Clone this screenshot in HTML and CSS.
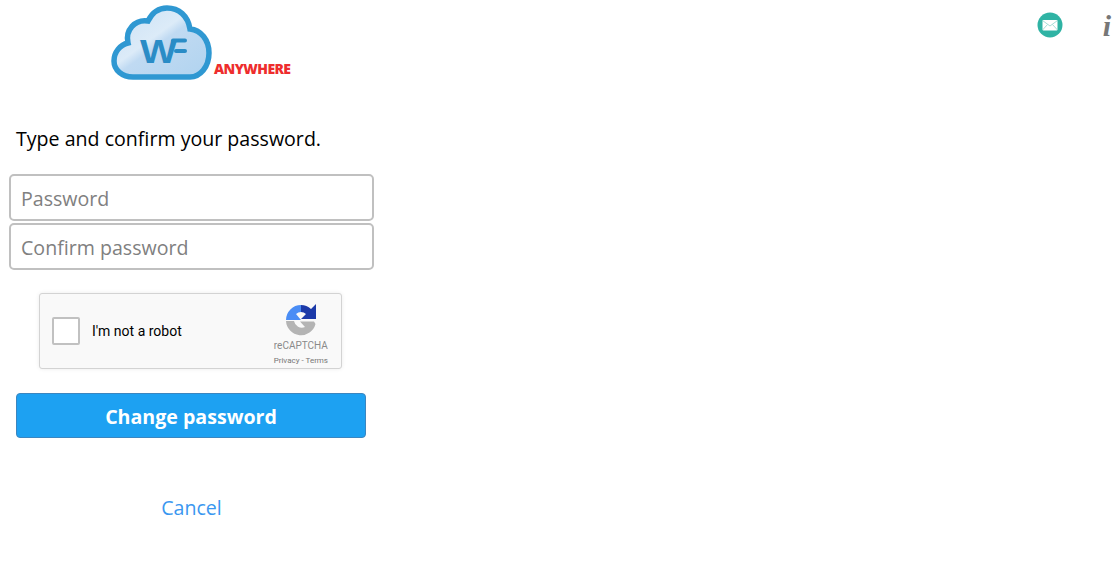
FILE: index.html
```html
<!DOCTYPE html>
<html lang="en">
<head>
  <meta charset="UTF-8" />
  <title>WF Anywhere - Change password</title>
  <meta name="viewport" content="width=device-width, initial-scale=1.0" />
  <link rel="stylesheet" href="styles.css">
</head>
<body>

  <div class="top-bar">
    <div class="logo">
      <svg class="logo-cloud" width="102" height="77" viewBox="-1 -1 102 77">
        <defs>
          <linearGradient id="cloud-fill" x1="0" y1="0" x2="1" y2="1">
            <stop offset="0" stop-color="#c9e0f5" />
            <stop offset="0.42" stop-color="#dcebf8" />
            <stop offset="0.5" stop-color="#c0daf2" />
            <stop offset="1" stop-color="#b0d3ef" />
          </linearGradient>
        </defs>
        <path d="M21 71 C10 71 2 64 2 55 C2 46 8 39 16 37 C13 24 23 13 36 15 C40 7 47 2 55 2 C67 2 76 10 78 23 C89 24 97 34 97 47 C97 61 88 71 78 71 Z" fill="url(#cloud-fill)" stroke="#2f98d2" stroke-width="5.5" />
        <text class="logo-w" x="28" y="57" textLength="37" lengthAdjust="spacingAndGlyphs">W</text>
        <rect x="59" y="32.5" width="16" height="4" rx="2" fill="#2a8cc6" />
        <rect x="62" y="43" width="13" height="4" rx="2" fill="#2a8cc6" />
      </svg>
      <span class="logo-name">ANYWHERE</span>
    </div>
    <div class="top-icons">
      <svg width="26" height="26" viewBox="0 0 26 26">
        <circle cx="13" cy="13" r="12.5" fill="#2fb3a4" />
        <rect x="5.5" y="8" width="15" height="10.5" rx="1" fill="#fff" />
        <path d="M5.5 8.5 L13 14 L20.5 8.5 M5.5 18 L10.5 12.5 M20.5 18 L15.5 12.5" fill="none" stroke="#8fd6cd" stroke-width="0.8" />
      </svg>
      <span class="info-icon">i</span>
    </div>
  </div>

  <div class="panel">
    <p class="intro">Type and confirm your password.</p>
    <input class="field" type="password" placeholder="Password" />
    <input class="field" type="password" placeholder="Confirm password" />

    <div class="captcha">
      <span class="captcha-check"></span>
      <span class="captcha-label">I'm not a robot</span>
      <div class="captcha-brand">
        <svg width="32" height="32" viewBox="0 0 32 32">
          <path d="M1 17 H9 A8 8 0 0 0 20 23 L15 17.5 H29 L30.5 20 A15 15 0 0 1 1 17 Z" fill="#b4b4b4" />
          <path d="M1 16 A15 15 0 0 1 16 1 V8 A8 8 0 0 0 11 10 L16 16 Z" fill="#4a8df5" />
          <path d="M16 1 A15 15 0 0 1 26 5 L31 0 V15 H16 L21 10 A8 8 0 0 0 16 8 Z" fill="#1c3aa9" />
        </svg>
        <span class="captcha-name">reCAPTCHA</span>
        <span class="captcha-links">Privacy - Terms</span>
      </div>
    </div>

    <button class="submit">Change password</button>
    <a class="cancel" href="#">Cancel</a>
  </div>

</body>
</html>
```

FILE: styles.css
```css
body {
  font-family: "Open Sans", "Noto Sans", sans-serif;
  background: #ffffff;
  margin: 0;
  color: #000;
}

.top-bar {
  display: flex;
  justify-content: space-between;
  height: 120px;
}

.logo {
  display: flex;
  align-items: flex-end;
  height: 78px;
  padding: 4px 0 0 110.5px;
}

.logo-cloud {
  display: block;
}

.logo-w {
  font-family: "Liberation Sans", sans-serif;
  font-size: 33px;
  font-weight: bold;
  fill: #2a8cc6;
}

.logo-name {
  margin: 0 0 5px 1.5px;
  font-size: 14px;
  font-weight: 800;
  letter-spacing: -0.6px;
  line-height: 16px;
  color: #ee2d2d;
}

.top-icons {
  display: flex;
  align-items: flex-start;
  gap: 40px;
  padding: 12px 8px 0 0;
}

.info-icon {
  font-family: "Liberation Serif", serif;
  font-size: 30px;
  font-style: italic;
  font-weight: bold;
  line-height: 28px;
  color: #777;
}

.panel {
  width: 365px;
  margin-left: 9px;
  display: flex;
  flex-direction: column;
  align-items: center;
}

.intro {
  align-self: flex-start;
  margin: 5px 0 22px 7px;
  font-size: 19.6px;
  line-height: 27px;
}

.field {
  box-sizing: border-box;
  width: 365px;
  height: 46.5px;
  margin-bottom: 2.5px;
  padding: 2px 10px 0;
  border: 2px solid #c0c0c0;
  border-radius: 5px;
  outline: none;
  font-family: inherit;
  font-size: 19.6px;
}

.field::placeholder {
  color: #808080;
}

.captcha {
  box-sizing: border-box;
  display: flex;
  align-items: center;
  align-self: flex-start;
  width: 303px;
  height: 76px;
  margin: 21px 0 24px 30px;
  padding: 0 12px;
  background: #f9f9f9;
  border: 1px solid #d3d3d3;
  border-radius: 3px;
  box-shadow: 0 0 4px rgba(0,0,0,0.08);
  font-family: Roboto, sans-serif;
}

.captcha-check {
  box-sizing: border-box;
  width: 28px;
  height: 28px;
  background: #fff;
  border: 2px solid #c1c1c1;
  border-radius: 2px;
}

.captcha-label {
  margin-left: 12px;
  font-size: 14px;
  color: #000;
}

.captcha-brand {
  display: flex;
  flex-direction: column;
  align-items: center;
  margin: 0 1px 0 auto;
  padding-top: 9px;
}

.captcha-name {
  margin-top: 2px;
  font-size: 10px;
  line-height: 16px;
  color: #8a8a8a;
}

.captcha-links {
  font-size: 8px;
  line-height: 14px;
  color: #777;
}

.submit {
  box-sizing: border-box;
  align-self: flex-start;
  width: 350px;
  height: 45px;
  margin-left: 7px;
  padding-top: 3px;
  background: #1da1f2;
  color: #fff;
  border: 1px solid #3b86c0;
  border-radius: 4px;
  font-family: inherit;
  font-size: 19.6px;
  font-weight: 700;
}

.cancel {
  margin-top: 56px;
  font-size: 19.6px;
  line-height: 27px;
  color: #3a97f0;
  text-decoration: none;
}
```
